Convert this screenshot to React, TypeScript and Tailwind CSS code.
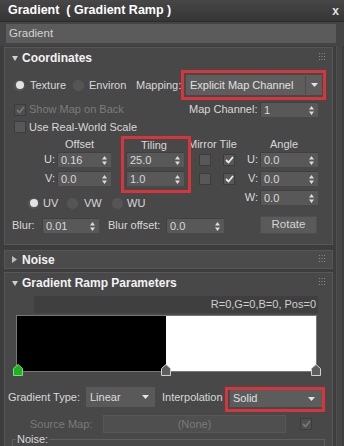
import React from 'react';

const Arrows: React.FC = () => (
  <svg width="5" height="9" viewBox="0 0 5 9" className="shrink-0">
    <path d="M2.5 0 L5 3.5 H0 Z M0 5.5 H5 L2.5 9 Z" fill="#dcdcdc" />
  </svg>
);

const DownArrow: React.FC = () => (
  <svg width="7" height="4" viewBox="0 0 7 4" className="shrink-0">
    <path d="M0 0 H7 L3.5 4 Z" fill="#e4e4e4" />
  </svg>
);

const Spinner: React.FC<{ value: string; className: string }> = ({ value, className }) => (
  <div className={`h-[15px] bg-[#585858] border-t border-l border-[#404040] flex items-center justify-between pl-[3px] pr-[4px] text-[#d8d8d8] ${className}`}>
    <span>{value}</span>
    <Arrows />
  </div>
);

const Check: React.FC<{ checked?: boolean; disabled?: boolean }> = ({ checked, disabled }) => (
  <div className={`w-[12px] h-[12px] shrink-0 flex items-center justify-center border border-[#3c3c3c] ${disabled ? 'bg-[#4e4e4e]' : 'bg-[#585858]'}`}>
    {checked && (
      <svg width="9" height="8" viewBox="0 0 9 8">
        <path d="M1 4 L3.5 6.5 L8 1" stroke={disabled ? '#777777' : '#ececec'} strokeWidth="1.8" fill="none" />
      </svg>
    )}
  </div>
);

const Radio: React.FC<{ on?: boolean }> = ({ on }) => (
  <div className="w-[13px] h-[13px] shrink-0 rounded-full bg-[#555555] border border-[#4a4a4a] flex items-center justify-center">
    {on && <div className="w-[8px] h-[8px] rounded-full bg-[#e2e2e2]" />}
  </div>
);

const Grip: React.FC = () => (
  <svg width="6" height="7" viewBox="0 0 6 7" className="shrink-0">
    {[0, 2.5, 5].map((x) =>
      [0, 3, 6].map((y) => <rect key={`${x}-${y}`} x={x} y={y} width="1" height="1" fill="#8c8c8c" />)
    )}
  </svg>
);

const RolloutHeader: React.FC<{ title: string; open: boolean }> = ({ title, open }) => (
  <div className="h-[20px] flex items-center pl-[7px] pr-[7px] shrink-0">
    <div className="w-[10px] flex items-center">
      {open ? (
        <svg width="6" height="5" viewBox="0 0 6 5"><path d="M0 0 H6 L3 5 Z" fill="#cfcfcf" /></svg>
      ) : (
        <svg width="5" height="7" viewBox="0 0 5 7"><path d="M0 0 L5 3.5 L0 7 Z" fill="#bdbdbd" /></svg>
      )}
    </div>
    <span className="font-bold text-[12px] text-[#f2f2f2]">{title}</span>
    <div className="ml-auto -mt-[3px]"><Grip /></div>
  </div>
);

const Coordinates: React.FC = () => (
  <div className="h-[198px] shrink-0 border border-[#575757] bg-[#484848] flex flex-col">
    <RolloutHeader title="Coordinates" open />
    {/* texture / environ / mapping */}
    <div className="h-[30px] mt-[2px] flex items-center">
      <div className="ml-[8px]"><Radio on /></div>
      <span className="ml-[4px] w-[42px]">Texture</span>
      <Radio />
      <span className="ml-[4px] w-[47px]">Environ</span>
      <span className="w-[45px]">Mapping:</span>
      <div className="w-[145px] h-[30px] border-[3px] border-[#d8343c] flex items-center pl-[2px] pr-[1px]">
        <div className="h-[20px] flex-1 bg-[#5d5d5d] flex items-center">
          <span className="pl-[4px] flex-1 text-[#e0e0e0]">Explicit Map Channel</span>
          <div className="w-[1px] h-[18px] bg-[#4a4a4a]" />
          <div className="w-[16px] flex justify-center"><DownArrow /></div>
        </div>
      </div>
    </div>
    {/* show map on back / map channel */}
    <div className="h-[17px] mt-[1px] flex items-center">
      <div className="ml-[9px]"><Check checked disabled /></div>
      <span className="ml-[3px] w-[160px] text-[#7c7c7c]">Show Map on Back</span>
      <span className="w-[71px]">Map Channel:</span>
      <Spinner value="1" className="w-[58px]" />
    </div>
    <div className="h-[16px] mt-[1px] flex items-center">
      <div className="ml-[9px]"><Check /></div>
      <span className="ml-[3px]">Use Real-World Scale</span>
    </div>
    {/* lower area */}
    <div className="mt-[1px] flex">
      <div className="w-[235px] flex flex-col">
        <div className="h-[57px] flex">
          {/* offset */}
          <div className="w-[116px] flex flex-col">
            <div className="h-[16px] flex items-center pl-[60px]">Offset</div>
            <div className="h-[15px] flex items-center">
              <span className="w-[50px] text-right">U:</span>
              <Spinner value="0.16" className="ml-[2px] w-[54px]" />
            </div>
            <div className="h-[15px] mt-[4px] flex items-center">
              <span className="w-[50px] text-right">V:</span>
              <Spinner value="0.0" className="ml-[2px] w-[54px]" />
            </div>
          </div>
          {/* tiling */}
          <div className="relative z-10 w-[70px] h-[57px] border-[3px] border-[#d8343c] flex flex-col pl-[2px]">
            <div className="h-[13px] flex items-center justify-center pr-[6px]">Tiling</div>
            <Spinner value="25.0" className="w-[58px]" />
            <Spinner value="1.0" className="mt-[4px] w-[58px]" />
          </div>
          {/* mirror / tile */}
          <div className="w-[49px] flex flex-col">
            <div className="h-[16px] flex items-center -ml-[3px] whitespace-nowrap">Mirror Tile</div>
            <div className="h-[15px] flex items-center">
              <div className="ml-[8px] mt-[1px]"><Check /></div>
              <div className="ml-[12px] mt-[1px]"><Check checked /></div>
            </div>
            <div className="h-[15px] mt-[4px] flex items-center">
              <div className="ml-[8px]"><Check /></div>
              <div className="ml-[12px]"><Check checked /></div>
            </div>
          </div>
        </div>
        {/* uv vw wu */}
        <div className="h-[14px] mt-[3px] flex items-center">
          <div className="ml-[22px]"><Radio on /></div>
          <span className="ml-[3px] w-[23px]">UV</span>
          <Radio />
          <span className="ml-[5px] w-[27px]">VW</span>
          <Radio />
          <span className="ml-[3px]">WU</span>
        </div>
        {/* blur */}
        <div className="h-[15px] mt-[8px] flex items-center">
          <span className="ml-[7px] w-[30px]">Blur:</span>
          <Spinner value="0.01" className="w-[57px]" />
          <span className="ml-[9px] w-[58px] whitespace-nowrap">Blur offset:</span>
          <Spinner value="0.0" className="w-[58px]" />
        </div>
      </div>
      {/* angle */}
      <div className="w-[82px] flex flex-col">
        <div className="h-[16px] flex items-center pl-[30px]">Angle</div>
        {['U:', 'V:', 'W:'].map((l, i) => (
          <div key={l} className={`h-[15px] flex items-center ${i > 0 ? 'mt-[4px]' : ''}`}>
            <span className="w-[18px] text-right">{l}</span>
            <Spinner value="0.0" className="ml-[2px] w-[58px]" />
          </div>
        ))}
        <div className="mt-[11px] ml-[20px] w-[57px] h-[18px] bg-[#5a5a5a] border border-[#4e4e4e] flex items-center justify-center text-[#d4d4d4] text-[11.5px]">
          Rotate
        </div>
      </div>
    </div>
  </div>
);

const Marker: React.FC<{ x: number; green?: boolean }> = ({ x, green }) => (
  <svg
    width="10"
    height="12"
    viewBox="0 0 10 12"
    className="absolute bottom-0"
    style={{ left: x - 5 }}
  >
    <path
      d="M0.5 11.5 V4.5 L5 0.5 L9.5 4.5 V11.5 Z"
      fill={green ? '#1fb21f' : '#5e5e5e'}
      stroke={green ? '#7ae07a' : '#d0d0d0'}
      strokeWidth="1"
    />
  </svg>
);

const GradientRamp: React.FC = () => (
  <div className="shrink-0 border border-[#575757] border-b-0 bg-[#484848] flex flex-col">
    <RolloutHeader title="Gradient Ramp Parameters" open />
    <div className="mt-[3px] h-[17px] ml-[29px] w-[284px] bg-[#3f3f3f] flex items-center justify-end pr-[2px] text-[#cfcfcf]">
      R=0,G=0,B=0, Pos=0
    </div>
    <div className="relative ml-[11px] w-[301px] h-[61px] mt-[2px]">
      <div className="h-[57px] border border-[#777777] flex">
        <div className="w-[149px] bg-black" />
        <div className="flex-1 bg-white" />
      </div>
      <Marker x={2} green />
      <Marker x={150} />
      <Marker x={300} />
    </div>
    {/* gradient type / interpolation */}
    <div className="mt-[11px] flex items-start">
      <span className="ml-[3px] w-[78px] h-[20px] leading-[20px] whitespace-nowrap">Gradient Type:</span>
      <div className="w-[69px] h-[20px] bg-[#595959] flex items-center justify-between pl-[4px] pr-[6px] text-[#dcdcdc]">
        <span>Linear</span>
        <DownArrow />
      </div>
      <span className="ml-[7px] w-[63px] h-[20px] leading-[20px] whitespace-nowrap">Interpolation</span>
      <div className="w-[100px] h-[25px] border-[3px] border-[#d8343c] pl-[2px] pr-[0px]">
        <div className="h-[17px] bg-[#5c5c5c] flex items-center justify-between pl-[3px] pr-[7px] text-[#e0e0e0]">
          <span>Solid</span>
          <DownArrow />
        </div>
      </div>
    </div>
    {/* source map */}
    <div className="mt-[3px] h-[18px] flex items-center">
      <span className="ml-[25px] w-[73px] text-[#7a7a7a]">Source Map:</span>
      <div className="w-[183px] h-[18px] bg-[#4f4f4f] border border-[#575757] flex items-center justify-center text-[#7a7a7a]">
        (None)
      </div>
      <div className="ml-[14px]"><Check checked disabled /></div>
    </div>
    <fieldset className="ml-[7px] mt-[1px] w-[313px] h-[24px] border border-[#5e5e5e] px-[3px]">
      <legend className="px-[1px] text-[#d8d8d8]">Noise:</legend>
    </fieldset>
  </div>
);

export default function App() {
  return (
    <div className="w-[344px] h-[446px] overflow-hidden bg-[#444444] text-[11px] leading-none text-[#d8d8d8] font-['Liberation_Sans',Arial,sans-serif] flex flex-col">
      <div className="h-[22px] shrink-0 flex items-center justify-between pl-[8px] pr-[5px] bg-gradient-to-b from-[#474747] to-[#353535] border-b border-[#2c2c2c]">
        <span className="font-bold text-[12.5px] text-white whitespace-pre">Gradient  ( Gradient Ramp )</span>
        <span className="font-bold text-[12px] text-[#e0e0e0]">x</span>
      </div>
      <div className="h-[24px] shrink-0 px-[6px] pt-[2px] bg-[#444444]">
        <div className="h-[19px] w-[330px] bg-[#5b5b5b] flex items-center pl-[3px] text-[#d2d2d2] text-[11.5px]">
          Gradient
        </div>
      </div>
      <div className="flex flex-1 min-h-0 bg-[#3d3d3d]">
        <div className="w-[333px] pl-[4px] pt-[1px] flex flex-col">
          <Coordinates />
          <div className="mt-[5px] h-[19px] shrink-0 border border-[#575757] bg-[#4b4b4b] flex flex-col justify-center">
            <RolloutHeader title="Noise" open={false} />
          </div>
          <div className="mt-[3px]">
            <GradientRamp />
          </div>
        </div>
        <div className="w-[11px] pl-[3px] pr-[2px]">
          <div className="h-full bg-[#464646] border-l border-[#505050]" />
        </div>
      </div>
    </div>
  );
}
